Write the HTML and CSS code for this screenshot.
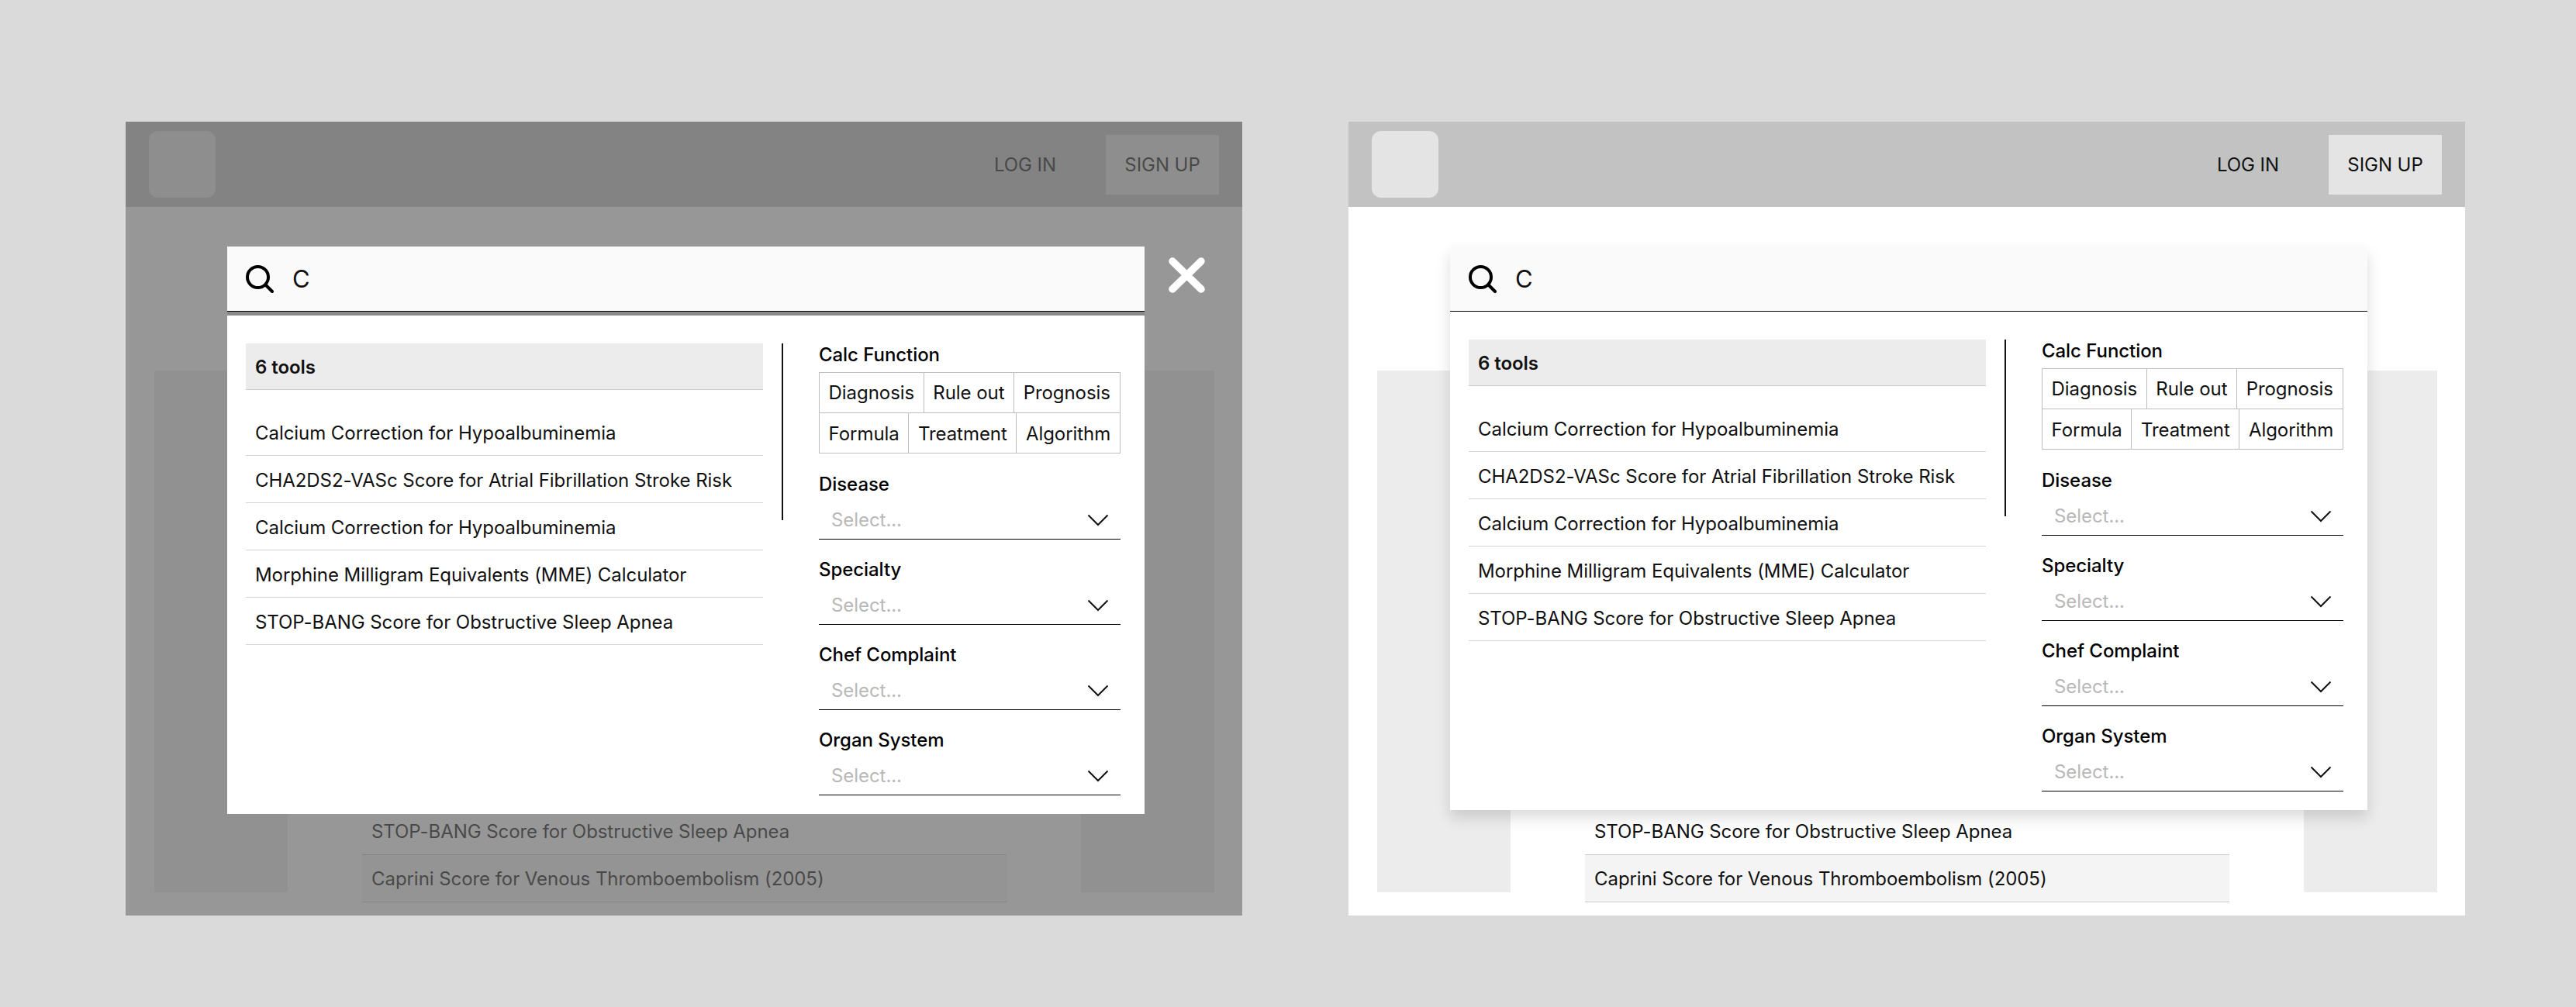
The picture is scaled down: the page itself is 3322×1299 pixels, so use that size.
FILE: index.html
```html
<!DOCTYPE html>
<html lang="en">
<head>
<meta charset="utf-8">
<title>Search tools</title>
<link rel="stylesheet" href="styles.css">
</head>
<body>
<div class="stage">

  <section class="board">
    <header class="topbar">
      <div class="logo"></div>
      <a class="login">LOG IN</a>
      <a class="signup">SIGN UP</a>
    </header>
    <main class="page">
      <div class="panel"></div>
      <div class="center">
        <div class="bg-list">
          <div class="bg-row">STOP-BANG Score for Obstructive Sleep Apnea</div>
          <div class="bg-row bg-row-alt">Caprini Score for Venous Thromboembolism (2005)</div>
        </div>
      </div>
      <div class="panel"></div>
    </main>
    <div class="overlay"></div>
    <div class="modal modal-open">
      <div class="search">
        <svg class="search-icon" viewBox="0 0 36 36"><circle cx="15.5" cy="15.5" r="13.500" fill="none" stroke="#000" stroke-width="4"/><path d="M25.500 25.500L34 34" fill="none" stroke="#000" stroke-width="4" stroke-linecap="round"/></svg>
        <span class="query">C</span>
      </div>
      <div class="modal-body">
        <div class="results">
          <div class="results-head">6 tools</div>
          <div class="result">Calcium Correction for Hypoalbuminemia</div>
          <div class="result">CHA2DS2-VASc Score for Atrial Fibrillation Stroke Risk</div>
          <div class="result">Calcium Correction for Hypoalbuminemia</div>
          <div class="result">Morphine Milligram Equivalents (MME) Calculator</div>
          <div class="result">STOP-BANG Score for Obstructive Sleep Apnea</div>
        </div>
        <div class="divider"></div>
        <div class="filters">
          <div class="field">
            <div class="label">Calc Function</div>
            <div class="chips"><span class="chip">Diagnosis</span><span class="chip">Rule out</span><span class="chip">Prognosis</span></div>
            <div class="chips chips-next"><span class="chip">Formula</span><span class="chip">Treatment</span><span class="chip">Algorithm</span></div>
          </div>
          <div class="field">
            <div class="label">Disease</div>
            <div class="select"><span>Select...</span><svg class="chev" viewBox="0 0 28 16"><path d="M1.5 1.5L14 14L26.500 1.500" fill="none" stroke="#111" stroke-width="2"/></svg></div>
          </div>
          <div class="field">
            <div class="label">Specialty</div>
            <div class="select"><span>Select...</span><svg class="chev" viewBox="0 0 28 16"><path d="M1.5 1.5L14 14L26.500 1.500" fill="none" stroke="#111" stroke-width="2"/></svg></div>
          </div>
          <div class="field">
            <div class="label">Chef Complaint</div>
            <div class="select"><span>Select...</span><svg class="chev" viewBox="0 0 28 16"><path d="M1.5 1.5L14 14L26.500 1.500" fill="none" stroke="#111" stroke-width="2"/></svg></div>
          </div>
          <div class="field">
            <div class="label">Organ System</div>
            <div class="select"><span>Select...</span><svg class="chev" viewBox="0 0 28 16"><path d="M1.5 1.5L14 14L26.500 1.500" fill="none" stroke="#111" stroke-width="2"/></svg></div>
          </div>
        </div>
      </div>
      <svg class="close" viewBox="0 0 47 46"><path d="M5 5L42 41M42 5L5 41" fill="none" stroke="#fff" stroke-width="9.500" stroke-linecap="round"/></svg>
    </div>
  </section>

  <section class="board">
    <header class="topbar">
      <div class="logo"></div>
      <a class="login">LOG IN</a>
      <a class="signup">SIGN UP</a>
    </header>
    <main class="page">
      <div class="panel"></div>
      <div class="center">
        <div class="bg-list">
          <div class="bg-row">STOP-BANG Score for Obstructive Sleep Apnea</div>
          <div class="bg-row bg-row-alt">Caprini Score for Venous Thromboembolism (2005)</div>
        </div>
      </div>
      <div class="panel"></div>
    </main>
    <div class="modal modal-raised">
      <div class="search">
        <svg class="search-icon" viewBox="0 0 36 36"><circle cx="15.5" cy="15.5" r="13.500" fill="none" stroke="#000" stroke-width="4"/><path d="M25.500 25.500L34 34" fill="none" stroke="#000" stroke-width="4" stroke-linecap="round"/></svg>
        <span class="query">C</span>
      </div>
      <div class="modal-body">
        <div class="results">
          <div class="results-head">6 tools</div>
          <div class="result">Calcium Correction for Hypoalbuminemia</div>
          <div class="result">CHA2DS2-VASc Score for Atrial Fibrillation Stroke Risk</div>
          <div class="result">Calcium Correction for Hypoalbuminemia</div>
          <div class="result">Morphine Milligram Equivalents (MME) Calculator</div>
          <div class="result">STOP-BANG Score for Obstructive Sleep Apnea</div>
        </div>
        <div class="divider"></div>
        <div class="filters">
          <div class="field">
            <div class="label">Calc Function</div>
            <div class="chips"><span class="chip">Diagnosis</span><span class="chip">Rule out</span><span class="chip">Prognosis</span></div>
            <div class="chips chips-next"><span class="chip">Formula</span><span class="chip">Treatment</span><span class="chip">Algorithm</span></div>
          </div>
          <div class="field">
            <div class="label">Disease</div>
            <div class="select"><span>Select...</span><svg class="chev" viewBox="0 0 28 16"><path d="M1.5 1.5L14 14L26.500 1.500" fill="none" stroke="#111" stroke-width="2"/></svg></div>
          </div>
          <div class="field">
            <div class="label">Specialty</div>
            <div class="select"><span>Select...</span><svg class="chev" viewBox="0 0 28 16"><path d="M1.5 1.5L14 14L26.500 1.500" fill="none" stroke="#111" stroke-width="2"/></svg></div>
          </div>
          <div class="field">
            <div class="label">Chef Complaint</div>
            <div class="select"><span>Select...</span><svg class="chev" viewBox="0 0 28 16"><path d="M1.5 1.5L14 14L26.500 1.500" fill="none" stroke="#111" stroke-width="2"/></svg></div>
          </div>
          <div class="field">
            <div class="label">Organ System</div>
            <div class="select"><span>Select...</span><svg class="chev" viewBox="0 0 28 16"><path d="M1.5 1.5L14 14L26.500 1.500" fill="none" stroke="#111" stroke-width="2"/></svg></div>
          </div>
        </div>
      </div>
    </div>
  </section>

</div>
</body>
</html>
```

FILE: styles.css
```css
* { box-sizing: border-box; }
html, body { margin: 0; height: 100%; }
body {
  background: #dadada;
  font-family: Inter, "Liberation Sans", sans-serif;
  font-size: 24px;
  line-height: 29px;
  letter-spacing: -0.06px;
  color: #111;
  overflow: hidden;
}
.stage {
  display: flex;
  gap: 137px;
  padding: 157px 0 0 162px;
}
.board {
  position: relative;
  flex: none;
  width: 1440px;
  height: 1024px;
  background: #fff;
  display: flex;
  flex-direction: column;
  overflow: hidden;
}
.topbar {
  flex: none;
  height: 110px;
  background: #c2c2c2;
  display: flex;
  align-items: center;
  padding: 0 30px;
}
.logo {
  width: 86px;
  height: 86px;
  border-radius: 12px;
  background: #e4e4e4;
  margin-right: auto;
}
.login { margin-right: 64px; color: #111; }
.signup {
  height: 77px;
  width: 146px;
  display: flex;
  align-items: center;
  justify-content: center;
  background: #e4e4e4;
  color: #111;
}
.page {
  flex: 1;
  display: flex;
  padding: 211px 36px 17px 37px;
}
.panel {
  flex: none;
  width: 172px;
  margin-bottom: 13px;
  background: #ececec;
}
.center {
  flex: 1;
  display: flex;
  align-items: flex-end;
  padding: 0 96px;
}
.bg-list { width: 100%; }
.bg-row {
  height: 61px;
  display: flex;
  align-items: center;
  padding-left: 12px;
  border-bottom: 1px solid #ccc;
}
.bg-row-alt { background: #f4f4f4; }
.overlay {
  position: absolute;
  inset: 0;
  background: rgba(100, 100, 100, 0.67);
}
.modal {
  position: absolute;
  left: 131px;
  top: 161px;
  width: 1183px;
}
.modal-raised { box-shadow: 0 10px 18px rgba(0, 0, 0, 0.14); }
.search {
  height: 84px;
  background: #fafafa;
  border-bottom: 1px solid #000;
  display: flex;
  align-items: center;
  gap: 24px;
  padding-left: 24px;
}
.modal-open .search { box-shadow: 0 5px 0 #8a8a8a; }
.modal-open .modal-body { margin-top: 5px; }
.search-icon { width: 36px; height: 36px; flex: none; }
.query { font-size: 31px; line-height: 36px; color: #111; }
.modal-body {
  background: #fff;
  display: flex;
  align-items: flex-start;
  padding: 36px 30px 24px 24px;
}
.results { flex: none; width: 667px; }
.results-head {
  height: 60px;
  background: #ececec;
  border-bottom: 1px solid #ccc;
  font-weight: 600;
  display: flex;
  align-items: center;
  padding: 1px 0 0 12px;
  margin-bottom: 24px;
}
.result {
  height: 61px;
  display: flex;
  align-items: center;
  padding: 2px 0 0 12px;
  border-bottom: 1px solid #d4d4d4;
}
.divider {
  flex: none;
  width: 2px;
  height: 228px;
  margin: 0 46px 0 24px;
  background: #111;
}
.filters { flex: none; width: 389px; }
.field + .field { margin-top: 24px; }
.field:nth-child(2) { margin-top: 25px; }
.label { font-weight: 500; color: #000; }
.chips { display: flex; margin-top: 8px; }
.chips-next { margin-top: -1px; }
.chip {
  flex: none;
  height: 53px;
  padding: 0 11.6px;
  border: 1px solid #bdbdbd;
  display: flex;
  align-items: center;
  white-space: nowrap;
  color: #111;
}
.chips-next .chip { padding-top: 1px; }
.chip + .chip { margin-left: -1px; }
.select {
  height: 57px;
  padding: 7px 15px 0 16px;
  border-bottom: 1px solid #000;
  display: flex;
  align-items: center;
  justify-content: space-between;
  color: #b8b8b8;
}
.chev { width: 28px; height: 16px; flex: none; }
.close {
  position: absolute;
  left: calc(100% + 31px);
  top: 14px;
  width: 47px;
  height: 46px;
}
```
